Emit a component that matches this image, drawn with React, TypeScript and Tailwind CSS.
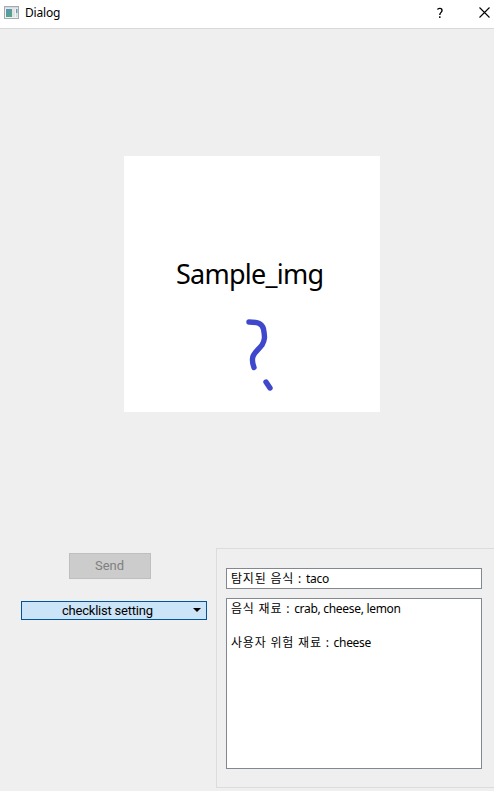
function TitleBar() {
  return (
    <header className="flex h-[29px] shrink-0 items-center border-b border-[#d9d9d9] bg-white pb-[3px]">
      <svg className="ml-1 shrink-0" width="16" height="14" viewBox="0 0 16 14">
        <defs>
          <linearGradient id="pane" x1="0" y1="0" x2="0.6" y2="1">
            <stop offset="0" stopColor="#5f8fc0" />
            <stop offset="1" stopColor="#52a783" />
          </linearGradient>
        </defs>
        <rect x="0.5" y="0.5" width="14" height="12" fill="#f2f2f2" stroke="#a6a9ad" />
        <rect x="1" y="1" width="13" height="1.5" fill="#d5d9dd" />
        <rect x="2" y="3" width="6" height="8" fill="url(#pane)" />
        <rect x="8" y="3" width="3" height="8" fill="#dfe3e5" />
        <rect x="12" y="3" width="1.5" height="4" fill="#6d9cb0" />
        <rect x="12" y="7" width="1.5" height="4" fill="#c9e0d5" />
      </svg>
      <span className="ml-[5px] text-[12px] leading-[16px] tracking-[-0.2px]">Dialog</span>
      <svg className="ml-auto mr-[35px]" width="8" height="12" viewBox="0 0 8 12" fill="none" stroke="#000" strokeWidth="1.4">
        <path d="M1.5 2.5C2 1.2 6 .6 6 3.4C6 5.5 3.8 5.3 3.8 8" />
        <path d="M3.8 9.3V11" />
      </svg>
      <svg className="mr-[4px]" width="11" height="11" viewBox="0 0 11 11" stroke="#000" strokeWidth="1.1">
        <path d="M.5 .5L10.5 10.5M10.5 .5L.5 10.5" />
      </svg>
    </header>
  );
}

function SampleImage() {
  return (
    <div className="ml-[124px] mt-[127px] flex h-[256px] w-[256px] shrink-0 flex-col bg-white">
      <div className="mt-[98px] pl-[52px] text-[27px] leading-[40px] tracking-[-0.75px] whitespace-nowrap">Sample_img</div>
      <svg className="ml-[116px] mt-[22px]" width="40" height="80" viewBox="0 0 40 80" fill="none" stroke="#3f48cc" strokeWidth="5.4" strokeLinecap="round" strokeLinejoin="round">
        <path d="M9 6C17 6 22 7 23.5 13C25 21 25 24 22 29C17 36 9 38 14 51.5" />
        <path d="M26 66L30 72" />
      </svg>
    </div>
  );
}

function Field({ label, value }: { label: string; value: string }) {
  return (
    <p className="whitespace-pre">
      <span className="tracking-[0.8px]">{label + " : "}</span>
      <span className="tracking-[-0.3px]">{value}</span>
    </p>
  );
}

export default function App() {
  return (
    <div className="flex h-[791px] w-[494px] flex-col overflow-hidden bg-[#efefef] font-['Noto_Sans','Noto_Sans_CJK_KR',sans-serif] text-black">
      <TitleBar />
      <SampleImage />
      <div className="mt-[136px] flex">
        <div className="flex w-[216px] shrink-0 flex-col font-['Roboto',sans-serif]">
          <button disabled className="ml-[69px] mt-[5px] h-[26px] w-[82px] border border-[#bfbfbf] bg-[#cccccc] pr-px text-[13px] leading-[24px] text-[#808080]">Send</button>
          <button className="ml-[21px] mt-[22px] flex h-[19px] w-[186px] items-center border border-[#005499] bg-[#cce4f7] text-[13px] leading-[17px]">
            <span className="ml-[40px] tracking-[-0.22px] whitespace-nowrap">checklist setting</span>
            <svg className="ml-auto mr-[5px] -mt-px" width="8" height="4" viewBox="0 0 8 4"><path d="M0 0H8L4 4Z" /></svg>
          </button>
        </div>
        <section className="h-[240px] flex-1 border-y border-l border-[#dcdcdc] pl-[9px] pt-[19px] text-[12px]">
          <div className="h-[21px] w-[256px] border border-[#828790] bg-white pl-[4px] leading-[19px]">
            <Field label="탐지된 음식" value="taco" />
          </div>
          <div className="mt-[9px] flex h-[171px] w-[256px] flex-col gap-[17px] border border-[#828790] bg-white pl-[4px] pt-px leading-[17px]">
            <Field label="음식 재료" value="crab, cheese, lemon" />
            <Field label="사용자 위험 재료" value="cheese" />
          </div>
        </section>
      </div>
    </div>
  );
}
